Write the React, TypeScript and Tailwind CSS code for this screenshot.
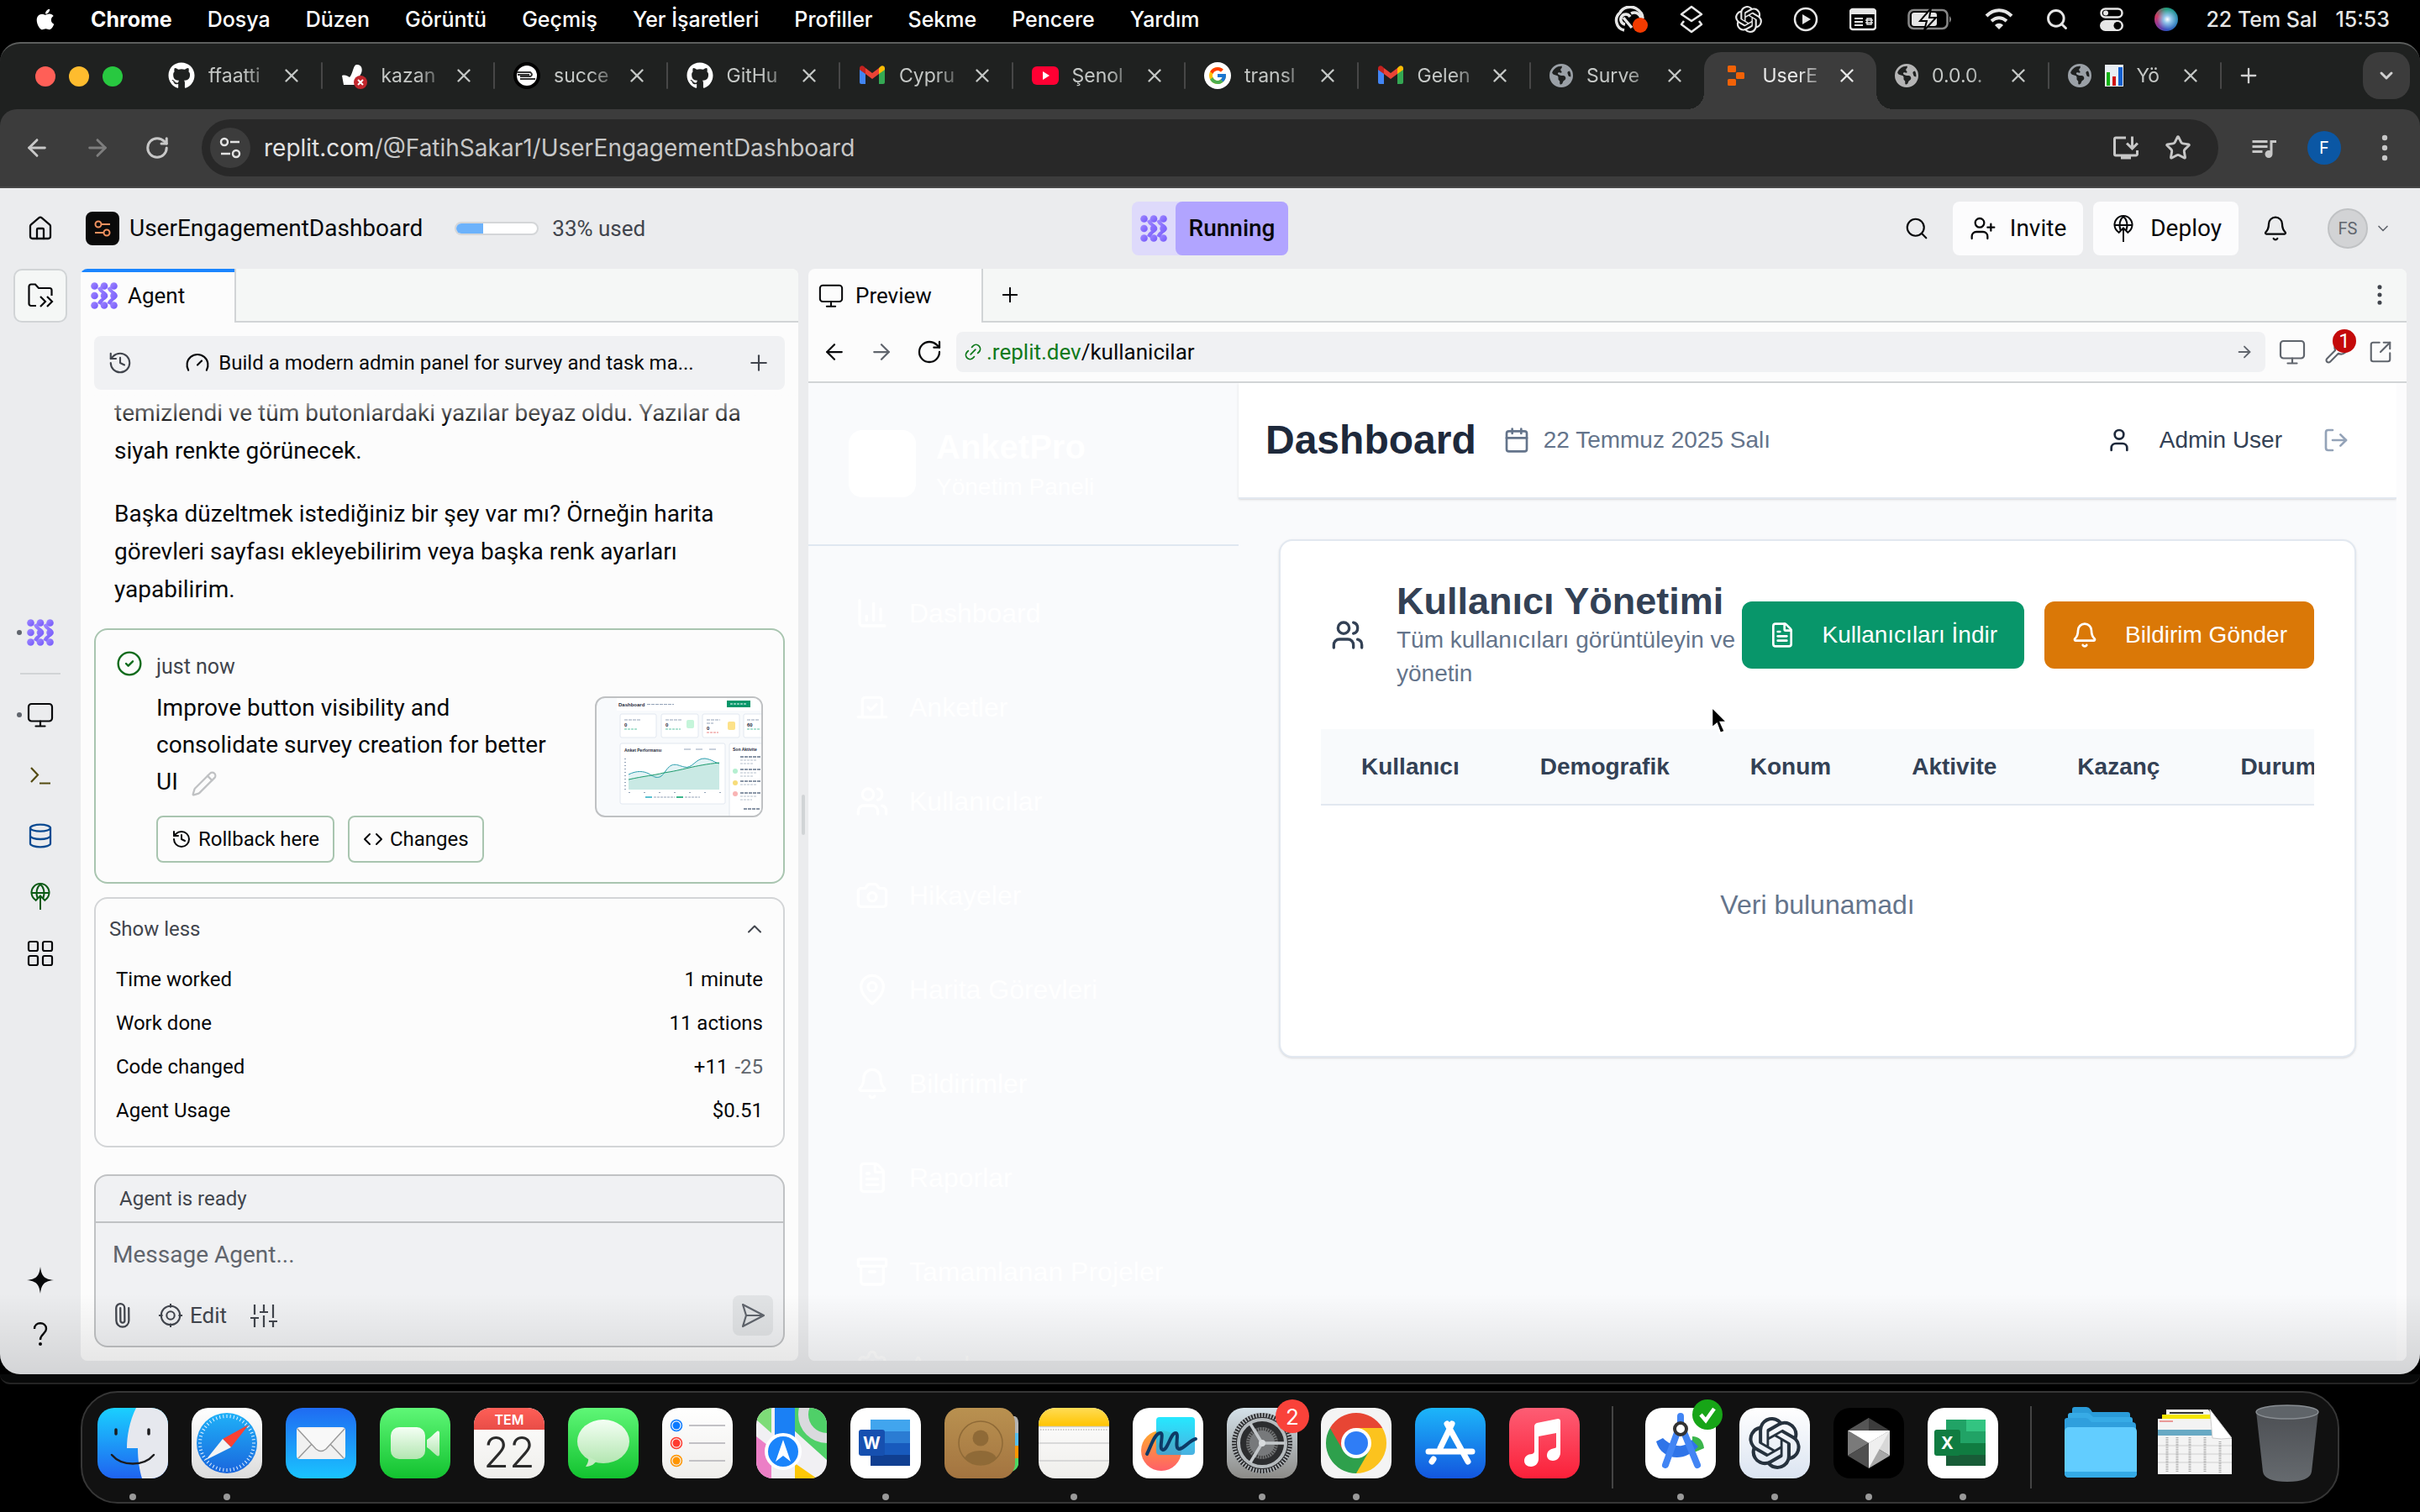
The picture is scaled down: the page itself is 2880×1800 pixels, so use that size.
import React from "react";
import {
  ArrowLeft, ArrowRight, RotateCw, Star, House, Search, UserPlus, Bell, ChevronDown, ChevronUp, Plus,
  Database, History, Gauge, Pencil, Code, Paperclip, EllipsisVertical, Link2, Wrench,
  SquareArrowOutUpRight, Calendar, User, LogOut, Users, FileText, ChartColumn, Vote, Camera, MapPin, Archive, Settings,
  X, CircleCheck,
} from "lucide-react";
import { FaApple, FaGithub, FaEarthAmericas } from "react-icons/fa6";
import { FcGoogle } from "react-icons/fc";
import { SiOpenai } from "react-icons/si";
import { MdInstallDesktop, MdQueueMusic } from "react-icons/md";

const mac = "font-[Inter,sans-serif]";
const plex = "font-[Roboto,sans-serif]";
const arial = "font-['Liberation_Sans',Arial,sans-serif]";

/* ---------- shared drawings ---------- */

function AgentMark({ className = "size-8" }: { className?: string }) {
  const id = React.useId();
  return (
    <svg viewBox="0 0 32 32" className={className} aria-hidden="true">
      <defs>
        <linearGradient id={id} x1="0" y1="0" x2="1" y2="1">
          <stop offset="0" stopColor="#a18bff" />
          <stop offset="1" stopColor="#7357fb" />
        </linearGradient>
      </defs>
      <g fill={`url(#${id})`}>
        <circle cx="4.5" cy="4.5" r="4.3" /><circle cx="16" cy="4.5" r="4.3" /><circle cx="27.5" cy="4.5" r="4.3" />
        <circle cx="4.5" cy="16" r="4.3" /><circle cx="16" cy="16" r="4.3" /><circle cx="27.5" cy="16" r="4.3" />
        <circle cx="4.5" cy="27.5" r="4.3" /><circle cx="16" cy="27.5" r="4.3" /><circle cx="27.5" cy="27.5" r="4.3" />
        <path d="M8 7c1 3 3 5 5 6v6c-2 1-4 3-5 6l4 2c1-3 3-5 6-7l2-4-2-4c-3-2-5-4-6-7z" />
        <path d="M19.500 7c1 3 3 5 5 6v6c-2 1-4 3-5 6l4 2c1-3 3-5 6-7l2-4-2-4c-3-2-5-4-6-7z" />
      </g>
    </svg>
  );
}

function MonitorMark({ className = "size-8" }: { className?: string }) {
  return (
    <svg viewBox="0 0 32 32" className={className} fill="none" stroke="currentColor" strokeWidth="2.200" aria-hidden="true">
      <rect x="2" y="3" width="28" height="20.500" rx="3.500" />
      <path d="M16 23.500v5M10.500 29.500h11" strokeLinecap="round" />
    </svg>
  );
}

function DeployMark({ className = "size-8" }: { className?: string }) {
  return (
    <svg viewBox="0 0 32 32" className={className} fill="none" stroke="currentColor" strokeWidth="2" aria-hidden="true">
      <path d="M10.500 20.500A10.500 10.500 0 1 1 21.500 20.500" />
      <path d="M6 12h20M12.500 18c-2-6-1-13 3.500-16 4.500 3 5.500 10 3.500 16M16 32V15M10 21.500l6-6 6 6" />
    </svg>
  );
}

function GmailMark() {
  return (
    <svg viewBox="0 0 32 32" className="size-8 shrink-0" aria-hidden="true">
      <path d="M1 8v16a2 2 0 0 0 2 2h5V13z" fill="#4285f4" />
      <path d="M31 8v16a2 2 0 0 1-2 2h-5V13z" fill="#34a853" />
      <path d="M24 7v7l7-5V7.500C31 4.500 28 3.500 26 5z" fill="#fbbc04" />
      <path d="M8 14V7l8 6 8-6v7l-8 6z" fill="#ea4335" />
      <path d="M1 9V7.500C1 4.500 4 3.500 6 5l2 2v7z" fill="#c5221f" />
    </svg>
  );
}

/* ---------- macOS menu bar ---------- */

const menus = ["Dosya", "Düzen", "Görüntü", "Geçmiş", "Yer İşaretleri", "Profiller", "Sekme", "Pencere", "Yardım"];

function MenuBar() {
  return (
    <header className={`${mac} flex h-[50px] shrink-0 items-center justify-between bg-black pr-9 pl-10 text-[25px] leading-8 font-medium text-white`}>
      <nav className="flex items-center gap-[42px] pb-1">
        <FaApple className="size-7" />
        <button className="-ml-0.5 font-bold">Chrome</button>
        {menus.map((m) => <button key={m}>{m}</button>)}
      </nav>
      <div className="flex items-center gap-[37px] pb-1 text-[#e6e6e6]">
        <svg viewBox="0 0 42 32" className="h-8 w-[42px]" fill="none" stroke="currentColor" strokeWidth="3.500">
          <path d="M14 29A12 12 0 0 1 9 8c3-6 12-9 19-5 5 3 8 7 8 12" /><path d="M15 22a6 6 0 1 1 6-9M13 14l10 12M22 9c6-3 11 1 12 6" />
          <circle cx="33" cy="23" r="9" fill="#f43b00" stroke="none" />
        </svg>
        <svg viewBox="0 0 30 34" className="h-[34px] w-[30px]" fill="none" stroke="currentColor" strokeWidth="2.500" strokeLinejoin="round">
          <path d="M15 2 3 11l12 8 12-8zM6 19l-3 4 12 9 12-9-3-4" />
        </svg>
        <SiOpenai className="size-8" />
        <svg viewBox="0 0 30 30" className="size-[30px]"><circle cx="15" cy="15" r="13" fill="none" stroke="currentColor" strokeWidth="2.500" /><path d="M11 9v12l10-6z" fill="currentColor" /></svg>
        <svg viewBox="0 0 32 28" className="h-7 w-8"><rect x="1" y="2" width="30" height="24" rx="3" fill="none" stroke="currentColor" strokeWidth="2.500" /><path d="M1 3h30v5H1zM6 12h10v2H6zM6 16h10v2H6zM6 20h10v2H6z" fill="currentColor" /><g fill="none" stroke="currentColor" strokeWidth="1.500"><path d="M21 13h5v7h-5zM19 15h9M19 18h9" /></g></svg>
        <svg viewBox="0 0 54 28" className="h-7 w-[54px]"><rect x="1.500" y="3" width="46" height="22" rx="6" fill="none" stroke="#888" strokeWidth="2.500" /><rect x="5" y="6" width="30" height="16" rx="3" fill="currentColor" /><path d="M50 10q4 4 0 8z" fill="#888" /><path d="M28 1 15 16h8l-3 11 14-15h-8z" fill="currentColor" stroke="#000" strokeWidth="2" /></svg>
        <svg viewBox="0 0 36 28" className="h-7 w-9" fill="none" stroke="currentColor" strokeWidth="4"><path d="M3 10C12 1 24 1 33 10M9 16c6-5 12-5 18 0" /><path d="m18 26-5-5c3-3 7-3 10 0z" fill="currentColor" stroke="none" /></svg>
        <Search className="size-7" strokeWidth={2.5} />
        <svg viewBox="0 0 28 28" className="size-7"><rect x="1.500" y="1.500" width="25" height="10" rx="5" fill="none" stroke="currentColor" strokeWidth="2.500" /><circle cx="7" cy="6.500" r="3" fill="currentColor" /><rect x="0" y="15" width="28" height="13" rx="6.500" fill="currentColor" /><circle cx="21" cy="21.500" r="4.500" fill="#000" /></svg>
        <span className="size-7 rounded-full bg-[radial-gradient(circle_at_55%_50%,#ffffff_0%,#8fc4ea_22%,transparent_60%),conic-gradient(#1f9e7a,#2a7fb8_30%,#3450c0_50%,#8c3a9a_65%,#d03a63_80%,#1f9e7a)]" />
        <span className="-ml-1 flex gap-[22px] whitespace-nowrap"><span>22 Tem Sal</span><span>15:53</span></span>
      </div>
    </header>
  );
}

/* ---------- Chrome tabs and toolbar ---------- */

const globe = <FaEarthAmericas className="size-7 shrink-0 text-[#9aa0a6]" />;

const tabs: { title: string; icon: React.ReactNode; active?: boolean; noRule?: boolean }[] = [
  { title: "ffaatti", icon: <FaGithub className="size-8 shrink-0 text-white" /> },
  {
    title: "kazan",
    icon: (
      <svg viewBox="0 0 32 32" className="size-8 shrink-0"><path d="M1 16c4-1 6 0 9 2 4-4 4-14 8-15 6-1 8 5 6 10l-8 14H3z" fill="#fff" /><circle cx="23" cy="24" r="8" fill="#c1272d" /><path d="m20 21 6 6m0-6-6 6" stroke="#fff" strokeWidth="2" /></svg>
    ),
  },
  {
    title: "succe",
    icon: (
      <svg viewBox="0 0 32 32" className="size-8 shrink-0"><circle cx="16" cy="16" r="16" fill="#000" /><circle cx="16" cy="16" r="12" fill="#fff" /><path d="M4 12h16q4 3 0 5H8m0 3h18M5 15h14" stroke="#333" strokeWidth="2" fill="none" /></svg>
    ),
  },
  { title: "GitHu", icon: <FaGithub className="size-8 shrink-0 text-white" /> },
  { title: "Cypru", icon: <GmailMark /> },
  {
    title: "Şenol",
    icon: (
      <svg viewBox="0 0 32 32" className="size-8 shrink-0"><rect y="5" width="32" height="22" rx="6" fill="#ff0033" /><path d="m13 11 8 5-8 5z" fill="#fff" /></svg>
    ),
  },
  { title: "transl", icon: <span className="flex size-8 shrink-0 items-center justify-center rounded-full bg-white"><FcGoogle className="size-6" /></span> },
  { title: "Gelen", icon: <GmailMark /> },
  { title: "Surve", icon: globe, noRule: true },
  {
    title: "UserE",
    active: true,
    noRule: true,
    icon: (
      <svg viewBox="0 0 32 32" className="size-8 shrink-0" fill="#f26207"><rect x="6" y="4" width="10" height="8" rx="1.500" /><rect x="16" y="12" width="10" height="8" rx="1.500" /><rect x="6" y="20" width="10" height="8" rx="1.500" /></svg>
    ),
  },
  { title: "0.0.0.", icon: <FaEarthAmericas className="size-7 shrink-0 text-[#b4b4b4]" /> },
  {
    title: "Yö",
    icon: (
      <>
        {globe}
        <svg viewBox="0 0 22 26" className="h-[26px] w-[22px] shrink-0"><path fill="#e8eef4" d="M0 0h22v26H0z" /><path fill="#10b010" d="M2 9h4v16H2z" /><path fill="#d01010" d="M9 14h4v11H9z" /><path fill="#1060d0" d="M16 3h5v22h-5z" /></svg>
      </>
    ),
  },
];

function ChromeTop() {
  return (
    <>
      <div className={`${mac} flex h-[78px] shrink-0 items-center pl-7 text-[23px]`}>
        <div className="flex w-[150px] shrink-0 items-center gap-4 pl-[14px]">
          <span className="size-6 rounded-full bg-[#ff5f57]" /><span className="size-6 rounded-full bg-[#febc2e]" /><span className="size-6 rounded-full bg-[#28c840]" />
        </div>
        <div role="tablist" className="flex h-full min-w-0 flex-1 items-center">
          {tabs.map((t, i) => (
            <div key={i} className={t.active ? "relative flex h-full min-w-0 flex-1 items-end" : "flex h-full min-w-0 flex-1 items-center pb-0.5"}>
              <div role="tab" aria-selected={!!t.active} className={t.active ? "flex h-[68px] min-w-0 flex-1 items-center rounded-t-[20px] bg-[#3c3c3c] pb-3 text-[#e8e8e8]" : "flex h-full min-w-0 flex-1 items-center text-[#c4c7c5]"}>
                <div className="flex min-w-0 flex-1 items-center gap-4 pl-[22px]">
                  {t.icon}
                  <span className="min-w-0 flex-1 whitespace-nowrap [mask-image:linear-gradient(to_right,#000_55%,rgba(0,0,0,0.1))]">{t.title}</span>
                </div>
                <button aria-label="Kapat" className="mr-[22px] ml-2 shrink-0"><X className="size-[26px]" strokeWidth={2.2} /></button>
              </div>
              {t.active && (
                <>
                  <span className="absolute bottom-0 -left-5 size-5 bg-[radial-gradient(circle_at_0_0,transparent_20px,#3c3c3c_20px)]" />
                  <span className="absolute -right-5 bottom-0 size-5 bg-[radial-gradient(circle_at_100%_0,transparent_20px,#3c3c3c_20px)]" />
                </>
              )}
              {!t.noRule && <span className="h-8 w-0.5 shrink-0 rounded bg-[#474747]" />}
            </div>
          ))}
        </div>
        <div className="flex w-[236px] shrink-0 items-center justify-between pr-3 pb-0.5 pl-[18px] text-[#d0d0d0]">
          <button aria-label="Yeni sekme"><Plus className="size-7" strokeWidth={2} /></button>
          <button aria-label="Sekme ara" className="flex size-14 items-center justify-center rounded-[20px] bg-[#3c3c3c]"><ChevronDown className="size-6" strokeWidth={3} /></button>
        </div>
      </div>
      <div className={`${mac} flex h-[94px] shrink-0 items-center rounded-t-[20px] border-b-2 border-[#474747] bg-[#3c3c3c] pr-6 pl-7 text-[#c7c7c7]`}>
        <button aria-label="Geri"><ArrowLeft className="size-8" strokeWidth={2.2} /></button>
        <button aria-label="İleri" className="ml-10 text-[#7d7d7d]"><ArrowRight className="size-8" strokeWidth={2.2} /></button>
        <button aria-label="Yenile" className="ml-10"><RotateCw className="size-[30px]" strokeWidth={2.4} /></button>
        <div className="ml-[38px] flex h-[68px] min-w-0 flex-1 items-center rounded-full bg-[#282828] pr-8 pl-2.5 text-[28px]">
          <button aria-label="Site bilgisi" className="flex size-12 items-center justify-center rounded-full bg-[#3c3c3c]">
            <svg viewBox="0 0 28 28" className="size-7" fill="none" stroke="#e3e3e3" strokeWidth="2.500"><circle cx="7" cy="7" r="4" /><path d="M14 7h11M3 21h11" /><circle cx="21" cy="21" r="4" /></svg>
          </button>
          <span className="ml-4 text-[#e3e3e3]">replit.com</span>
          <input aria-label="Adres" defaultValue="/@FatihSakar1/UserEngagementDashboard" className="min-w-0 flex-1 bg-transparent outline-none" />
          <button aria-label="Yükle" className="mr-7"><MdInstallDesktop className="size-9" /></button>
          <button aria-label="Yer işareti"><Star className="size-8" strokeWidth={2.2} /></button>
        </div>
        <div className="ml-9 flex items-center gap-[34px]">
          <button aria-label="Medya"><MdQueueMusic className="size-9" /></button>
          <button className="flex size-10 items-center justify-center rounded-full bg-[#0b57a4] text-xl text-white">F</button>
          <button aria-label="Menü" className="flex w-9 justify-center">
            <svg viewBox="0 0 8 32" className="h-8 w-2" fill="currentColor"><circle cx="4" cy="4" r="3.200" /><circle cx="4" cy="16" r="3.200" /><circle cx="4" cy="28" r="3.200" /></svg>
          </button>
        </div>
      </div>
    </>
  );
}

/* ---------- Replit header, rail, agent ---------- */

function ReplitHeader() {
  return (
    <div className="grid h-24 shrink-0 grid-cols-[1fr_auto_1fr] items-center px-8 text-[28px] leading-8">
      <div className="flex items-center">
        <button aria-label="Home"><House className="size-8" strokeWidth={1.7} /></button>
        <span className="ml-[38px] flex size-10 items-center justify-center rounded-lg bg-[#0a0a0a]">
          <svg viewBox="0 0 24 24" className="size-6" fill="none" stroke="#f0915f" strokeWidth="2"><circle cx="7" cy="7" r="3.500" /><path d="M10.500 7H21M3 17h10" /><circle cx="17" cy="17" r="3.500" /></svg>
        </span>
        <span className="ml-3 font-normal">UserEngagementDashboard</span>
        <span className="ml-[38px] h-4 w-[100px] overflow-hidden rounded-lg border-2 border-[#d4d6d8] bg-white"><span className="block h-full w-1/3 bg-[#6cb2fb]" /></span>
        <span className="ml-4 text-[26px] text-[#41454d]">33% used</span>
      </div>
      <button className="flex h-16 items-center rounded-lg bg-[#dedafb] font-medium">
        <span className="flex w-[52px] justify-center"><AgentMark /></span>
        <span className="flex h-16 items-center rounded-lg bg-[#b1a4ff] px-4">Running</span>
      </button>
      <div className="flex items-center justify-end pr-0.5">
        <button aria-label="Search"><Search className="size-[30px]" strokeWidth={1.7} /></button>
        <button className="ml-7 flex h-16 items-center gap-4 rounded-lg bg-[#fcfcfd] px-5"><UserPlus className="size-8" strokeWidth={1.7} />Invite</button>
        <button className="ml-3 flex h-16 items-center gap-4 rounded-lg bg-[#fcfcfd] px-5"><DeployMark />Deploy</button>
        <button aria-label="Notifications" className="ml-7"><Bell className="size-8" strokeWidth={1.7} /></button>
        <button className="ml-[46px] flex items-center gap-2 text-[20px] text-[#60656d]">
          <span className="flex size-12 items-center justify-center rounded-full border-2 border-[#c0c2c4] bg-[#d2d3d5]">FS</span>
          <ChevronDown className="size-5" strokeWidth={2} />
        </button>
      </div>
    </div>
  );
}

function Rail() {
  return (
    <aside className="flex w-24 shrink-0 flex-col items-center">
      <button aria-label="Files" className="flex size-16 items-center justify-center rounded-[10px] border-2 border-[#d1d4d6] bg-[#f5f7f6]">
        <svg viewBox="0 0 32 32" className="size-8" fill="none" stroke="currentColor" strokeWidth="2.200"><path d="M11 28H5a2.500 2.500 0 0 1-2.500-2.500V5A2.500 2.500 0 0 1 5 2.500h5l4 4.500h13A2.500 2.500 0 0 1 29.500 9.500V16M16 17l6 6-6 6M24 17l6 6-6 6" /></svg>
      </button>
      <div className="mt-[353px] flex w-full flex-col items-center">
        <button aria-label="Agent" className="flex w-full items-center pl-5"><span className="mr-1.5 size-1.5 rounded-full bg-[#60656d]" /><AgentMark /></button>
        <span className="mt-8 h-0.5 w-12 bg-[#d1d4d6]" />
        <button aria-label="Preview" className="mt-8 flex w-full items-center pl-5"><span className="mr-1.5 size-1.5 rounded-full bg-[#60656d]" /><MonitorMark /></button>
        <button aria-label="Shell" className="mt-10 text-[#544a10]">
          <svg viewBox="0 0 32 32" className="size-8" fill="none" stroke="currentColor" strokeWidth="2.200"><path d="m5 7 8 8.500L5 24M15 25.500h13" /></svg>
        </button>
        <button aria-label="Database" className="mt-10 text-[#0b4a91]"><Database className="size-8" strokeWidth={1.7} /></button>
        <button aria-label="Deployments" className="mt-10 text-[#0b5a14]"><DeployMark /></button>
        <button aria-label="All tools" className="mt-9">
          <svg viewBox="0 0 32 32" className="size-8" fill="none" stroke="currentColor" strokeWidth="2.200"><rect x="2" y="2" width="11" height="11" rx="2" /><rect x="19" y="2" width="11" height="11" rx="2" /><rect x="2" y="19" width="11" height="11" rx="2" /><rect x="19" y="19" width="11" height="11" rx="2" /></svg>
        </button>
      </div>
      <div className="mt-auto flex flex-col items-center gap-7 pb-3">
        <svg viewBox="0 0 32 32" className="size-8"><path d="M16 0c1.500 11 4 14.500 16 16-12 1.500-14.500 5-16 16-1.500-11-4-14.500-16-16 12-1.500 14.500-5 16-16z" fill="#07080a" /></svg>
        <button aria-label="Help">
          <svg viewBox="0 0 32 40" className="h-10 w-8" fill="none" stroke="currentColor" strokeWidth="2.400"><path d="M9 14c0-9 14-9 14 0 0 6-7 6-7 13" /><circle cx="16" cy="32" r="2" fill="currentColor" stroke="none" /></svg>
        </button>
      </div>
    </aside>
  );
}

function Thumbnail() {
  return (
    <svg viewBox="0 0 196 140" className="h-36 w-[200px] shrink-0 rounded-xl border-2 border-[#bfc1c3] bg-[#f8fafc]" role="img" aria-label="Checkpoint screenshot">
      <path d="M24 0h176v15H24z" fill="#fff" />
      <g fill="#fff" stroke="#e2e8f0"><rect x="28" y="19" width="43" height="28" rx="2" /><rect x="77" y="19" width="44" height="28" rx="2" /><rect x="126" y="19" width="44" height="28" rx="2" /><rect x="175" y="19" width="44" height="28" rx="2" /><rect x="28" y="54" width="125" height="72" rx="2" /><rect x="158" y="54" width="60" height="90" rx="2" /></g>
      <g fontFamily="Liberation Sans, sans-serif" fontWeight="700" fill="#1e293b">
        <text x="26" y="10" fontSize="6">Dashboard</text>
        <text x="33" y="64" fontSize="5">Anket Performansı</text>
        <text x="162" y="63" fontSize="5">Son Aktivite</text>
        <text x="33" y="34" fontSize="6">0</text><text x="82" y="34" fontSize="6">0</text><text x="131" y="38" fontSize="6">0</text><text x="179" y="34" fontSize="6">60</text>
      </g>
      <path d="M60 7.500h32M33 26h20M82 26h20M131 26h16M131 30h8M179 26h14" stroke="#94a3b8" strokeWidth="1" strokeDasharray="4 1" />
      <path d="M33 37h16M82 37h18M179 37h16" stroke="#5fc4a5" strokeWidth="1" strokeDasharray="3 1" />
      <path d="M131 41h14" stroke="#ea8080" strokeWidth="1" strokeDasharray="3 1" />
      <rect x="155" y="3" width="28" height="8" fill="#059669" /><path d="M159 7h20" stroke="#fff" strokeWidth="1" strokeDasharray="3 1" />
      <rect x="107" y="26" width="9" height="10" rx="2" fill="#c5f5da" /><rect x="156" y="28" width="9" height="10" rx="2" fill="#fde28a" />
      <path d="M104 61h8M118 61h8M134 61h8" stroke="#94a3b8" strokeWidth="1" />
      <path d="M38 91c10-5 18-4 24-1 8 5 13 8 20-3 8-12 14-7 22-5 10 3 14-11 25-10 8 1 12 5 17 6v31H38z" fill="#e3f3f5" />
      <path d="M38 97c18-4 30-5 42-8 22-3 36-9 66-12v32H38z" fill="#c9e9e4" />
      <path d="M38 91c10-5 18-4 24-1 8 5 13 8 20-3 8-12 14-7 22-5 10 3 14-11 25-10 8 1 12 5 17 6" fill="none" stroke="#2a9dad" />
      <path d="M38 97c18-4 30-5 42-8 22-3 36-9 66-12" fill="none" stroke="#1c9a6c" />
      <path d="M34 72v38" stroke="#94a3b8" strokeWidth="2" strokeDasharray="1 3" /><path d="M38 112.500h110" stroke="#94a3b8" strokeDasharray="2 16" />
      <path d="M58 118h8" stroke="#5bc0d0" strokeWidth="2" /><path d="M95 118h8" stroke="#3cb58a" strokeWidth="2" /><path d="M68 118h25M105 118h18" stroke="#94a3b8" strokeDasharray="3 1" />
      <circle cx="165" cy="87" r="3" fill="#b5efd0" /><circle cx="165" cy="101" r="3" fill="#f7dc7a" /><circle cx="165" cy="114" r="3" fill="#f9b4b4" />
      <path d="M171 70h24M171 85h24M171 99h24M171 113h24M175 132h20" stroke="#64748b" strokeWidth="1.500" strokeDasharray="4 1" />
      <path d="M171 74h20M171 78h16M171 89h20M171 93h16M171 103h20M171 117h20M171 121h14" stroke="#b6c0cc" strokeDasharray="3 1" />
    </svg>
  );
}

const stats: [string, React.ReactNode][] = [
  ["Time worked", "1 minute"],
  ["Work done", "11 actions"],
  ["Code changed", <>+11 <span className="ml-0.5 text-[#60656d]">-25</span></>],
  ["Agent Usage", "$0.51"],
];

function AgentPanel() {
  return (
    <section className="flex w-[854px] shrink-0 flex-col overflow-hidden rounded-lg bg-[#fcfcfc] text-2xl leading-8">
      <div className="flex h-16 shrink-0">
        <button className="flex w-[183px] items-center gap-3 border-t-4 border-[#1a85ff] pb-1 pl-3 text-[26px]"><AgentMark />Agent</button>
        <div className="flex-1 border-b-2 border-l-2 border-[#d1d4d6] bg-[#f5f7f6]" />
      </div>
      <div className="relative flex min-h-0 flex-1 flex-col px-4 pt-4 pb-4">
        <div className="relative z-10 flex h-16 shrink-0 items-center rounded-lg bg-[#f0f1f3] px-4">
          <button aria-label="History" className="text-[#41454d]"><History className="size-[30px]" strokeWidth={1.7} /></button>
          <span className="ml-auto flex items-center gap-2.5"><Gauge className="size-[30px]" strokeWidth={1.7} />Build a modern admin panel for survey and task ma...</span>
          <button aria-label="New chat" className="ml-auto"><Plus className="size-[30px] text-[#41454d]" strokeWidth={1.7} /></button>
        </div>
        <div className="pointer-events-none absolute inset-x-0 top-20 z-[5] h-10 bg-linear-to-b from-[#fcfcfc] to-transparent" />
        <div className="mt-[5px] shrink-0 px-6 text-[28px] leading-[45px]">
          <p>temizlendi ve tüm butonlardaki yazılar beyaz oldu. Yazılar da siyah renkte görünecek.</p>
          <p className="mt-[30px]">Başka düzeltmek istediğiniz bir şey var mı? Örneğin harita görevleri sayfası ekleyebilirim veya başka renk ayarları yapabilirim.</p>
        </div>
        <article className="mt-6 flex h-[304px] shrink-0 rounded-2xl border-2 border-[#a9c5b0] pt-6 pr-6 pl-6">
          <CircleCheck className="size-8 shrink-0 text-[#0f6b1c]" strokeWidth={1.8} />
          <div className="ml-4 flex min-w-0 flex-1 flex-col">
            <span className="pt-1 text-[25px] text-[#41454d]">just now</span>
            <div className="mt-[11px] flex justify-between">
              <div>
                <h3 className="w-[490px] text-[28px] leading-[44px]">Improve button visibility and consolidate survey creation for better UI <Pencil className="ml-2 inline size-8 text-[#bfc1c3]" strokeWidth={1.7} /></h3>
                <div className="mt-[18px] flex gap-4">
                  <button className="flex h-14 items-center gap-2 rounded-lg border-2 border-[#a9c5b0] px-4"><History className="size-6" strokeWidth={2} />Rollback here</button>
                  <button className="flex h-14 items-center gap-2 rounded-lg border-2 border-[#a9c5b0] px-4"><Code className="size-6" strokeWidth={2} />Changes</button>
                </div>
              </div>
              <div className="mt-2"><Thumbnail /></div>
            </div>
          </div>
        </article>
        <div className="mt-4 shrink-0 rounded-2xl border-2 border-[#d3d5d7] px-4 pt-5 pb-4">
          <button className="flex w-full items-center justify-between pr-1 text-[#41454d]">Show less<ChevronUp className="size-7" strokeWidth={1.7} /></button>
          <dl className="mt-[18px] px-2">
            {stats.map(([k, v]) => (
              <div key={k} className="flex h-[52px] items-center justify-between"><dt>{k}</dt><dd>{v}</dd></div>
            ))}
          </dl>
        </div>
        <form className="mt-auto flex h-[206px] shrink-0 flex-col rounded-2xl border-2 border-[#c0c2c4] bg-[#f0f1f3] text-[#41454d]">
          <p className="flex h-14 items-center border-b-2 border-[#c0c2c4] px-7">Agent is ready</p>
          <textarea aria-label="Message Agent" placeholder="Message Agent..." rows={1} className="mx-5 mt-5 h-10 resize-none bg-transparent text-[28px] leading-9 outline-none placeholder:text-[#60656d]" />
          <div className="mt-auto mr-3 mb-3 ml-4 flex items-center text-[26px]">
            <button type="button" aria-label="Attach"><Paperclip className="size-[30px] -rotate-45" strokeWidth={1.8} /></button>
            <button type="button" className="ml-7 flex items-center gap-2">
              <svg viewBox="0 0 32 32" className="size-[30px]" fill="none" stroke="currentColor" strokeWidth="2.200"><circle cx="16" cy="16" r="12" /><circle cx="16" cy="16" r="5" /><path d="M16 1v5M16 26v5M1 16h5M26 16h5" /></svg>
              Edit
            </button>
            <button type="button" aria-label="Options" className="ml-7">
              <svg viewBox="0 0 32 32" className="size-8" fill="none" stroke="currentColor" strokeWidth="2.200"><path d="M5 3v12M5 19v11M0 19h10M16 3v9M11 12h10M16 16v14M27 3v16M27 23v7M22 23h10" /></svg>
            </button>
            <button aria-label="Send" className="ml-auto flex size-12 items-center justify-center rounded-lg bg-[#e1e3e5] text-[#60656d]">
              <svg viewBox="0 0 32 32" className="size-8" fill="none" stroke="currentColor" strokeWidth="2.200" strokeLinejoin="round"><path d="M4 3l25 13L4 29l4-13zM8 16h21" /></svg>
            </button>
          </div>
        </form>
      </div>
    </section>
  );
}

/* ---------- Preview panel ---------- */

const nav: [string, React.ElementType][] = [
  ["Dashboard", ChartColumn], ["Anketler", Vote], ["Kullanıcılar", Users], ["Hikayeler", Camera], ["Harita Görevleri", MapPin],
  ["Bildirimler", Bell], ["Raporlar", FileText], ["Tamamlanan Projeler", Archive], ["Ayarlar", Settings],
];
const columns = ["Kullanıcı", "Demografik", "Konum", "Aktivite", "Kazanç", "Durum"];

function PreviewedPage() {
  return (
    <div className={`${arial} flex min-h-0 flex-1 overflow-hidden bg-[#f9fafc]`}>
      <nav className="w-[512px] shrink-0 text-white">
        <div className="flex h-[194px] items-center gap-6 border-b-2 border-[#dfe7f1] px-12">
          <span className="size-20 rounded-2xl bg-white" />
          <div><p className="text-[40px] leading-[56px] font-bold">AnketPro</p><p className="text-[28px] leading-10">Yönetim Paneli</p></div>
        </div>
        <ul className="flex flex-col gap-8 pt-10">
          {nav.map(([label, Icon]) => (
            <li key={label}><a href="#" className="flex h-20 items-center gap-6 px-14 text-[32px]"><Icon className="size-10" strokeWidth={2} />{label}</a></li>
          ))}
        </ul>
      </nav>
      <div className="flex min-w-0 flex-1 flex-col">
        <header className="flex h-[138px] shrink-0 items-center border-b-2 border-[#e2e8f0] bg-white pr-14 pl-8 text-[28px] shadow-sm">
          <h1 className="text-[48px] leading-[56px] font-bold text-[#1e293b]">Dashboard</h1>
          <span className="ml-8 flex items-center gap-4 text-[#64748b]"><Calendar className="size-8" strokeWidth={2} />22 Temmuz 2025 Salı</span>
          <span className="ml-auto flex items-center gap-8 text-[#334155]"><User className="size-8 text-[#1e293b]" strokeWidth={2} />Admin User</span>
          <button aria-label="Çıkış" className="ml-12 text-[#94a3b8]"><LogOut className="size-8" strokeWidth={2} /></button>
        </header>
        <main className="p-12">
          <section className="rounded-2xl border-2 border-[#e2e8f0] bg-white px-12 shadow-sm">
            <div className="flex items-center pt-[46px]">
              <Users className="ml-3 size-10 shrink-0 text-[#334155]" strokeWidth={2} />
              <div className="ml-[38px] min-w-0 flex-1 whitespace-nowrap">
                <h2 className="text-[45px] leading-[52px] font-bold text-[#334155]">Kullanıcı Yönetimi</h2>
                <p className="text-[28px] leading-10 text-[#64748b]">Tüm kullanıcıları görüntüleyin ve<br />yönetin</p>
              </div>
              <button className="flex h-20 shrink-0 items-center gap-8 rounded-xl bg-[#08966a] px-8 text-[28px] text-white"><FileText className="size-8" strokeWidth={2} />Kullanıcıları İndir</button>
              <button className="ml-6 flex h-20 shrink-0 items-center gap-8 rounded-xl bg-[#da7807] px-8 text-[28px] text-white"><Bell className="size-8" strokeWidth={2} />Bildirim Gönder</button>
            </div>
            <div className="mt-[46px] overflow-hidden">
              <table className="w-full text-left text-[28px] text-[#334155]">
                <thead>
                  <tr className="h-[90px] border-b-2 border-[#e2e8f0] bg-[#f8fafc]">
                    {columns.map((c) => <th key={c} className="px-12 font-bold">{c}</th>)}
                  </tr>
                </thead>
              </table>
            </div>
            <p className="pt-[98px] pb-[160px] text-center text-[32px] leading-10 text-[#64748b]">Veri bulunamadı</p>
          </section>
        </main>
      </div>
      <div className="w-3 shrink-0 bg-[#fcfcfd]" />
    </div>
  );
}

function PreviewPanel() {
  return (
    <section className="flex min-w-0 flex-1 flex-col overflow-hidden rounded-lg bg-[#fcfcfc] text-[26px] leading-8">
      <div className="flex h-16 shrink-0">
        <button className="flex w-[206px] items-center gap-3.5 pl-3"><MonitorMark className="size-[30px]" />Preview</button>
        <div className="flex flex-1 items-center justify-between border-b-2 border-l-2 border-[#d1d4d6] bg-[#f5f7f6] pr-4 pl-[18px]">
          <button aria-label="New tab"><Plus className="size-7" strokeWidth={1.7} /></button>
          <button aria-label="Options" className="text-[#41454d]"><EllipsisVertical className="size-8" fill="currentColor" strokeWidth={1.8} /></button>
        </div>
      </div>
      <div className="flex h-[72px] shrink-0 items-center border-b-2 border-[#d1d4d6] pr-4 pl-4">
        <button aria-label="Back"><ArrowLeft className="size-[30px]" strokeWidth={1.8} /></button>
        <button aria-label="Forward" className="ml-[26px] text-[#60656d]"><ArrowRight className="size-[30px]" strokeWidth={1.8} /></button>
        <button aria-label="Reload" className="ml-[26px]"><RotateCw className="size-8" strokeWidth={1.7} /></button>
        <div className="ml-4 flex h-12 min-w-0 flex-1 items-center rounded-lg bg-[#f0f1f3] pr-3.5 pl-2">
          <Link2 className="size-6 -rotate-45 text-[#0f7a1c]" strokeWidth={1.8} />
          <span className="ml-1 text-[#0f7a1c]">.replit.dev</span>
          <input aria-label="Path" defaultValue="/kullanicilar" className="min-w-0 flex-1 bg-transparent outline-none" />
          <ArrowRight className="size-[22px] text-[#60656d]" strokeWidth={2} />
        </div>
        <div className="ml-4 flex items-center gap-[22px] text-[#60656d]">
          <button aria-label="Devices"><MonitorMark /></button>
          <button aria-label="Devtools" className="relative">
            <Wrench className="size-[30px]" strokeWidth={1.7} />
            <span className="absolute -top-3 left-2.5 flex size-7 items-center justify-center rounded-full bg-[#c40a0a] text-2xl leading-7 text-white">1</span>
          </button>
          <button aria-label="Open in new tab"><SquareArrowOutUpRight className="size-[30px]" strokeWidth={1.7} /></button>
        </div>
      </div>
      <PreviewedPage />
    </section>
  );
}

/* ---------- Dock ---------- */

function Tile({ children, bg = "#fff" }: { children?: React.ReactNode; bg?: string }) {
  const id = React.useId();
  return (
    <svg viewBox="0 0 84 84" className="block size-[84px]" aria-hidden="true">
      <clipPath id={id}><rect width="84" height="84" rx="20" /></clipPath>
      <g clipPath={`url(#${id})`}><rect width="84" height="84" fill={bg} />{children}</g>
    </svg>
  );
}

function Gradients() {
  const list: [string, string, string][] = [
    ["gFinder", "#1ad0ff", "#1f63f0"], ["gMail", "#1f6bf2", "#1ac4ff"], ["gGreen", "#5ff777", "#12c22f"], ["gWhite", "#ffffff", "#dcdcdc"],
    ["gPaper", "#ffffff", "#efeeeb"], ["gSafari", "#1fb1f8", "#1a66dd"], ["gBrown", "#b99150", "#a37440"], ["gYellow", "#ffdc55", "#ffc400"],
    ["gSteel", "#d5e2ea", "#8c8b88"], ["gStore", "#1cb6fa", "#1356de"], ["gMusic", "#fd5d74", "#fb2039"],
    ["gOrange", "#ffab2e", "#ff5f68"], ["gCyan", "#08e5ff", "#31a6dc"], ["gBubble", "#f4fff4", "#b3e6b1"], ["gRed", "#ff5f57", "#e84d47"],
    ["gTrash", "#53565b", "#6f7479"],
  ];
  return (
    <svg className="absolute size-0" aria-hidden="true">
      <defs>{list.map(([id, a, b]) => <linearGradient key={id} id={id} x1="0" y1="0" x2="0" y2="1"><stop offset="0" stopColor={a} /><stop offset="1" stopColor={b} /></linearGradient>)}</defs>
    </svg>
  );
}

const ring = (n: number, r: number, len: number, w: number, color: string) =>
  Array.from({ length: n }, (_, i) => <path key={i} d={`M42 ${42 - r}v${len}`} stroke={color} strokeWidth={w} transform={`rotate(${(i * 360) / n} 42 42)`} />);

const apps: { name: string; running?: boolean; badge?: React.ReactNode; rule?: boolean; art: React.ReactNode }[] = [
  {
    name: "Finder", running: true,
    art: <Tile bg="url(#gFinder)"><path d="M46 0C38 16 35 34 35 48h13c0 14 2 26 5 36h31V0z" fill="#e6e8ee" /><g fill="none" stroke="#1c1c1e" strokeLinecap="round"><path d="M22 26v5M61 26v5" strokeWidth="3.500" /><path d="M17 56c12 14 38 14 50 0" strokeWidth="2.500" /></g></Tile>,
  },
  {
    name: "Safari", running: true,
    art: <Tile bg="url(#gWhite)"><circle cx="42" cy="42" r="36" fill="url(#gSafari)" />{ring(48, 34, 4, 1, "#e8f4ff")}<path d="m68 20-21 27-10-10z" fill="#fa4133" /><path d="m17 62 20-25 10 10z" fill="#f4f4f4" /></Tile>,
  },
  {
    name: "Mail",
    art: <Tile bg="url(#gMail)"><rect x="13" y="23" width="58" height="38" rx="4" fill="#f1f1f1" /><g fill="none" stroke="#9a9a9a" strokeWidth="1.500"><path d="m15 60 18-19M69 60 51 41" /><path d="m14 25 22 24q6 5 12 0l22-24" fill="#f8f8f8" /></g></Tile>,
  },
  {
    name: "FaceTime",
    art: <Tile bg="url(#gGreen)"><rect x="13" y="23" width="41" height="38" rx="10" fill="url(#gBubble)" /><path d="M56 38c4-2 8-7 12-10 2-1 3 0 3 2v25c0 2-1 3-3 2-4-3-8-8-12-10z" fill="url(#gBubble)" /></Tile>,
  },
  {
    name: "Takvim",
    art: <Tile bg="url(#gPaper)"><rect width="84" height="26" fill="url(#gRed)" /><g fontFamily="Inter, sans-serif" textAnchor="middle"><text x="42" y="20" fontSize="16" fontWeight="600" fill="#fff">TEM</text><text x="42" y="71" fontSize="50" fontWeight="300" fill="#2b2b2b">22</text></g></Tile>,
  },
  {
    name: "Mesajlar",
    art: <Tile bg="url(#gGreen)"><ellipse cx="42" cy="40" rx="31" ry="26" fill="url(#gBubble)" /><path d="M24 58c1 5-1 9-3 12 7 0 11-4 13-7z" fill="#c4ecc2" /></Tile>,
  },
  {
    name: "Anımsatıcılar",
    art: <Tile bg="url(#gPaper)"><g stroke="#c2c1c5" strokeWidth="2"><path d="M32 21h43M32 42h43M32 63h43" /></g>{[["#0a7aff", 21], ["#ff3b30", 42], ["#ff9500", 63]].map(([c, y]) => <g key={y}><circle cx="17" cy={y} r="6.500" fill="none" stroke={c as string} strokeWidth="1.500" /><circle cx="17" cy={y} r="4.500" fill={c as string} /></g>)}</Tile>,
  },
  {
    name: "Haritalar",
    art: <Tile bg="#f1f0f3"><path d="M0 0h18v30L0 14z" fill="#7edc78" /><path d="M44 0h40v62L44 26z" fill="#4fd068" /><circle cx="84" cy="8" r="28" fill="none" stroke="#dadade" strokeWidth="12" /><path d="M0 34 18 48v36H0z" fill="#ec7fc6" /><path d="m46 66 26 18H46z" fill="#fdc708" /><path d="M22 0h24v40H22z" fill="#1a80f5" /><circle cx="32" cy="52" r="20" fill="#1a84fb" stroke="#fff" strokeWidth="4" /><path d="m32 38 9 26-9-7-9 7z" fill="#fff" /></Tile>,
  },
  {
    name: "Word", running: true,
    art: <Tile><path d="M24 14h47v14H24z" fill="#41a5ee" /><path d="M24 28h47v14H24z" fill="#2b7cd3" /><path d="M24 42h47v14H24z" fill="#185abd" /><path d="M24 56h47v13H24z" fill="#103f91" /><rect x="10" y="26" width="31" height="31" rx="3" fill="#1650b0" /><text x="25.500" y="49" textAnchor="middle" fontFamily="Inter, sans-serif" fontSize="20" fontWeight="700" fill="#fff">W</text></Tile>,
  },
  {
    name: "Kişiler",
    art: (
      <svg viewBox="0 0 88 84" className="block h-[84px] w-[88px] max-w-none"><path d="M76 10h8q4 2 4 8v12H76z" fill="#b5b5b5" /><path d="M76 30h12v15H76z" fill="#55bef0" /><path d="M76 45h12v15H76z" fill="#ff9500" /><path d="M76 60h12v8q-2 6-8 8h-4z" fill="#4cd964" /><rect width="84" height="84" rx="18" fill="url(#gBrown)" /><circle cx="43" cy="42" r="26" fill="none" stroke="#8f6a37" strokeWidth="1.500" /><circle cx="43" cy="36" r="9.500" fill="#8f6a37" /><path d="M24 60c4-12 34-12 38 0-8 10-30 10-38 0z" fill="#8f6a37" /></svg>
    ),
  },
  {
    name: "Notlar", running: true,
    art: <Tile bg="url(#gPaper)"><rect width="84" height="22" fill="url(#gYellow)" /><path d="M0 22.500h84M0 42h84M0 63h84" stroke="#cfcfcf" strokeWidth="1.500" /><path d="M2 26h80" stroke="#bdbdbd" strokeWidth="1.500" strokeDasharray="1.500 1.500" /></Tile>,
  },
  {
    name: "Freeform",
    art: <Tile><circle cx="34" cy="51" r="24" fill="url(#gOrange)" /><rect x="28" y="11" width="46" height="45" rx="4" fill="url(#gCyan)" opacity=".88" /><path d="M17 55c5-10 9-25 16-25 5 0-3 19 3 20 6 0 9-20 15-20 5 0-2 18 4 19 6 0 12-10 20-12" fill="none" stroke="#0d3a66" strokeWidth="4" strokeLinecap="round" /></Tile>,
  },
  {
    name: "Sistem Ayarları", running: true,
    badge: <span className="absolute -top-2.5 -right-3.5 flex size-10 items-center justify-center rounded-full bg-[#f9423a] text-[26px] text-white">2</span>,
    art: <Tile bg="url(#gSteel)"><circle cx="42" cy="42" r="36" fill="#2c2d2f" />{ring(60, 36, 5, 1.6, "#b9bec2")}<circle cx="42" cy="42" r="28" fill="none" stroke="#b5babd" strokeWidth="4" /><circle cx="42" cy="42" r="19" fill="#77797b" />{ring(36, 19, 4, 1.4, "#3a3a3a")}<g stroke="#c3c7ca" strokeWidth="3.500"><path d="M42 42h27M42 42 28 19M42 42 28 65" /></g><circle cx="42" cy="42" r="4" fill="#d9dcde" /></Tile>,
  },
  {
    name: "Chrome", running: true,
    art: <Tile bg="#f4f4f4"><path d="M42 42 10.800 24a36 36 0 0 1 62.400 0z" fill="#e74634" /><path d="M42 42 73.200 24A36 36 0 0 1 42 78z" fill="#fcc31e" /><path d="M42 42v36A36 36 0 0 1 10.800 24z" fill="#2ea04c" /><path d="M42 24h31.200L58 51z" fill="#fcc31e" /><path d="M10.800 24 26.500 51 42 40z" fill="#e74634" /><path d="m26.500 51 15.500 27 15.600-27-15.600-4z" fill="#2ea04c" /><circle cx="42" cy="42" r="18" fill="#fff" /><circle cx="42" cy="42" r="14" fill="#2f7df6" /></Tile>,
  },
  {
    name: "App Store",
    art: <Tile bg="url(#gStore)"><g stroke="#fff" strokeWidth="7" strokeLinecap="round"><path d="M16 52h52M44 19 30 48M38 19l25 45M22 61l-2 3" /></g></Tile>,
  },
  {
    name: "Müzik",
    art: <Tile bg="url(#gMusic)"><path d="M30 22c0-2 1-3 3-4l25-5c2 0 3 1 3 3v37c0 6-4 10-9 10-4 0-7-3-7-6 0-6 4-8 9-9 2 0 2-1 2-3V30l-21 4v27c0 5-4 9-9 9-5 0-8-3-8-7 0-5 4-8 9-8 2-1 3-1 3-4z" fill="#fff" /></Tile>,
  },
  {
    name: "Android Studio", running: true, rule: true,
    badge: <span className="absolute -top-2.5 -right-2 flex size-9 items-center justify-center rounded-full bg-[#17a517]"><svg viewBox="0 0 36 36" className="size-9"><path d="m10 18 6 7 10-14" fill="none" stroke="#fff" strokeWidth="4.500" /></svg></span>,
    art: <Tile><path d="M56 34q12 0 14 14l-14 6z" fill="#3ab54a" /><path d="M13 40c6 22 34 26 50 6l-8-8c-8 10-22 10-34-2z" fill="#2f74e8" /><path d="M42 10v12M40 24 24 68M44 24l18 44" stroke="#4285f4" strokeWidth="8" strokeLinecap="round" /><circle cx="42" cy="25" r="7" fill="#fff" stroke="#333" strokeWidth="4" /></Tile>,
  },
  {
    name: "ChatGPT", running: true,
    art: <span className="flex size-[84px] items-center justify-center rounded-[20px] bg-linear-to-b from-white to-[#dbe4f1] text-[#26323e]"><SiOpenai className="size-[62px]" /></span>,
  },
  {
    name: "Cursor", running: true,
    art: <Tile bg="#000"><path d="m42 12 25 15H17z" fill="#3c3c3c" /><path d="m42 12-25 15h25z" fill="#555" /><path d="M17 27v30l25-15z" fill="#7a7a7a" /><path d="M67 27v30L42 42z" fill="#d8d8d8" /><path d="m17 57 25 15V42z" fill="#4f4f4f" /><path d="m67 57-25 15V42z" fill="#a8a8a8" /><path d="M17 27h50L42 42z" fill="#fff" /><path d="M67 27 42 72V42z" fill="#efefef" /></Tile>,
  },
  {
    name: "Excel", running: true,
    art: <Tile><path d="M22 14h47v55H22z" fill="#21a366" /><path d="M46 14h23v14H46z" fill="#33c481" /><path d="M22 42h47v14H22z" fill="#107c41" /><path d="M22 56h47v13H22z" fill="#185c37" /><rect x="8" y="26" width="31" height="31" rx="3" fill="#107c41" /><text x="23.500" y="49" textAnchor="middle" fontFamily="Inter, sans-serif" fontSize="20" fontWeight="700" fill="#fff">X</text></Tile>,
  },
  {
    name: "İndirilenler", rule: true,
    art: <svg viewBox="0 0 88 86" className="-mt-0.5 block h-[86px] w-[88px] max-w-none"><path d="M10 4q0-3 3-3h14q3 0 5 3l2 3h42q3 0 3 3v30H10z" fill="#2a9bd8" /><path d="M5 11q0-3 3-3h20q3 0 5 3l2 2h44q3 0 3 3v30H5z" fill="#37abe6" /><path d="M1 17q0-3 3-3h22q3 0 5 3l2 2h48q5 0 5 4v30H1z" fill="#2f9fdd" /><rect x="1" y="25" width="86" height="60" rx="5" fill="#62cdff" /><path d="M1 78h86v2q0 5-5 5H6q-5 0-5-5z" fill="#34aae6" /></svg>,
  },
  {
    name: "Belgeler",
    art: <svg viewBox="0 0 88 84" className="block h-[84px] w-[88px] max-w-none"><path d="M10 2h50l14 18v20H10z" fill="#f5f5f5" /><path d="M14 5h40v2H14z" fill="#333" /><path d="M5 8h58v6H5z" fill="#f4e600" /><path d="M0 13h66l22 24v42H0z" fill="#f3f3f3" /><path d="M0 26h66v7H0z" fill="#68a9c4" /><g stroke="#aaa"><path d="M11 35v42M23 35v42M38 35v42M56 35v42M74 40v37" strokeWidth="3" strokeDasharray="1 1" /><path d="M0 45h88M0 55h88M0 65h88" strokeWidth=".5" /></g><path d="M62 2q2 24 3 34 10 2 23 0z" fill="#fff" stroke="#ccc" /><path d="M2 16h16" stroke="#e04040" /></svg>,
  },
  {
    name: "Çöp Sepeti",
    art: <svg viewBox="0 0 84 92" className="-mt-1 block h-[92px] w-[84px]"><path d="M5 8h74l-8 72q-2 12-29 12T13 80z" fill="url(#gTrash)" opacity=".9" /><ellipse cx="42" cy="9" rx="37" ry="8" fill="#5f6469" stroke="#888d92" strokeWidth="1.500" /></svg>,
  },
];

function Dock() {
  return (
    <nav aria-label="Dock" className={`${mac} mx-auto mt-2 flex h-[134px] w-fit shrink-0 gap-7 rounded-[44px] border-2 border-[#363636] bg-[#111] px-[18px] pt-[18px]`}>
      {apps.map((a) => (
        <React.Fragment key={a.name}>
          {a.rule && <span className="mx-[10px] -mt-0.5 h-[98px] w-0.5 bg-[#444]" />}
          <button aria-label={a.name} className="relative flex h-[110px] w-[84px] flex-col items-start">
            {a.art}
            {a.badge}
            {a.running && <span className="mt-auto size-2 self-center rounded-full bg-[#9a9a9a]" />}
          </button>
        </React.Fragment>
      ))}
    </nav>
  );
}

export default function App() {
  return (
    <div className="flex h-screen flex-col overflow-hidden bg-black">
      <Gradients />
      <MenuBar />
      <div className="relative flex min-h-0 flex-1 flex-col overflow-hidden rounded-[24px] border-t-2 border-[#5c5e5d] bg-[#1f2120]">
        <ChromeTop />
        <div className={`${plex} flex min-h-0 flex-1 flex-col bg-[#ebecee] text-[#07080a]`}>
          <ReplitHeader />
          <div className="flex min-h-0 flex-1 pr-4 pb-4">
            <Rail />
            <AgentPanel />
            <div className="flex w-3 shrink-0 items-center justify-center"><span className="h-12 w-1 rounded bg-[#d1d4d6]" /></div>
            <PreviewPanel />
          </div>
        </div>
        <div className="pointer-events-none absolute inset-x-0 bottom-0 h-24 bg-linear-to-b from-transparent to-black/10" />
      </div>
      <div className="h-3 shrink-0 rounded-b-[20px] border-b-2 border-[#242424] bg-[#080909]" />
      <Dock />
      <div className="h-2.5 shrink-0" />
      <svg viewBox="0 0 26 38" className="pointer-events-none absolute top-[839px] left-[2035px] h-[38px] w-[26px]" aria-hidden="true">
        <path d="M2 2v26l6-5 4 11 6-2-5-11h8z" fill="#000" stroke="#fff" strokeWidth="2.500" />
      </svg>
    </div>
  );
}
